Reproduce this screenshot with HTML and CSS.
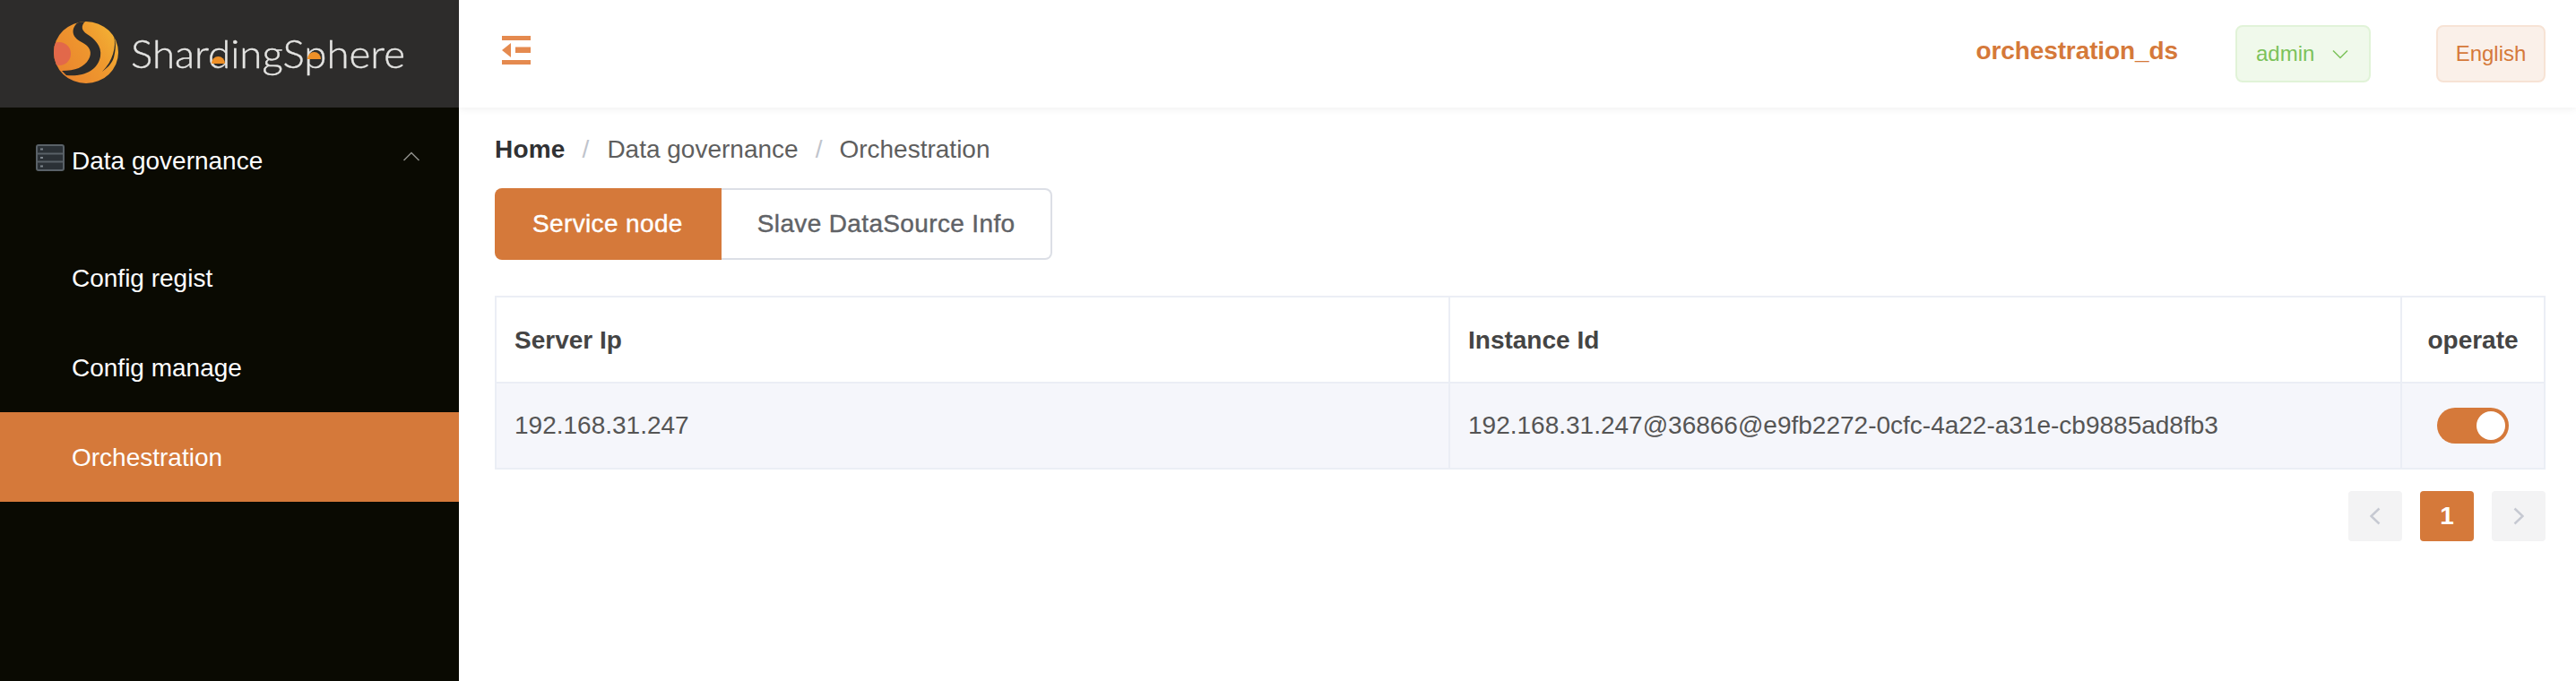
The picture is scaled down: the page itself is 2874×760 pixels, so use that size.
FILE: index.html
```html
<!DOCTYPE html>
<html lang="en">
<head>
<meta charset="utf-8">
<title>ShardingSphere</title>
<link rel="stylesheet" href="styles.css">
</head>
<body>
<div class="app">
  <aside class="sidebar">
    <div class="brand">
      <svg class="logo" width="512" height="120" viewBox="0 0 512 120">
        <defs>
          <linearGradient id="fire" x1="0" y1="0.7" x2="1" y2="0.1">
            <stop offset="0" stop-color="#ea842e"/>
            <stop offset="0.6" stop-color="#ef9a2e"/>
            <stop offset="1" stop-color="#f3b636"/>
          </linearGradient>
          <clipPath id="ball"><ellipse cx="96" cy="58.500" rx="36" ry="34.500"/></clipPath>
        </defs>
        <g clip-path="url(#ball)">
          <rect x="60" y="24" width="72" height="70" fill="url(#fire)"/>
          <circle cx="66" cy="60" r="13" fill="#e2684a"/>
          <path d="M88 24C79 31 79 41 91 47C101 52 103 59 99 66C94 75 84 79 69 79L74 84C93 86 109 79 112 63C114 51 105 43 97 38C91 34 90 29 95 24Z" fill="#2d2c2b"/>
          <path d="M127 40C130 52 126 68 114 80C122 74 125 70 127 64C129 56 130 48 127 40Z" fill="#2d2c2b"/>
          <path d="M118 28H134V44C130 38 124 33 118 28Z" fill="#2d2c2b"/>
        </g>
        <text class="logo-text" x="146" y="76" textLength="306" lengthAdjust="spacingAndGlyphs">ShardingSphere</text>
        <path d="M236 71A7.500 8 0 0 1 251 71Z" fill="#ee9028"/>
        <path d="M343 66A7.500 8 0 0 1 358 66Z" fill="#ee9028"/>
      </svg>
    </div>
    <nav class="menu">
      <div class="menu-title">
        <svg class="menu-icon" width="32" height="30" viewBox="0 0 32 30">
          <rect x="1" y="1" width="30" height="28" rx="2" fill="#2b3136" stroke="#596167" stroke-width="2"/>
          <path d="M1 10.500H31M1 19.500H31" stroke="#596167" stroke-width="2"/>
          <path d="M5 5.500H8M5 15H8M5 24.500H8" stroke="#7d858c" stroke-width="2"/>
        </svg>
        <span class="menu-label">Data governance</span>
        <svg class="chev" width="20" height="11" viewBox="0 0 20 11"><path d="M1.500 10L10 1.500L18.500 10" fill="none" stroke="#8f8f8a" stroke-width="1.500"/></svg>
      </div>
      <a class="menu-item">Config regist</a>
      <a class="menu-item">Config manage</a>
      <a class="menu-item active">Orchestration</a>
    </nav>
  </aside>
  <div class="main">
    <header class="topbar">
      <svg class="collapse" width="32" height="32" viewBox="0 0 32 32">
        <path d="M0 0H32V5H0ZM0 27H32V32H0ZM15 12.500H32V19H15ZM10 8V24L0 16Z" fill="#e58a4f"/>
      </svg>
      <div class="top-right">
        <span class="ds">orchestration_ds</span>
        <button class="pill admin">admin
          <svg width="18" height="11" viewBox="0 0 18 11"><path d="M1 1.500L9 9.500L17 1.500" fill="none" stroke="#7cc25a" stroke-width="1.500"/></svg>
        </button>
        <button class="pill lang">English</button>
      </div>
    </header>
    <section class="content">
      <div class="crumbs">
        <strong>Home</strong><i>/</i><span>Data governance</span><i>/</i><span>Orchestration</span>
      </div>
      <div class="tabs">
        <button class="tab on">Service node</button><button class="tab">Slave DataSource Info</button>
      </div>
      <table class="grid">
        <colgroup><col class="c1"><col class="c2"><col class="c3"></colgroup>
        <thead>
          <tr><th>Server Ip</th><th>Instance Id</th><th class="mid">operate</th></tr>
        </thead>
        <tbody>
          <tr>
            <td>192.168.31.247</td>
            <td>192.168.31.247@36866@e9fb2272-0cfc-4a22-a31e-cb9885ad8fb3</td>
            <td class="mid"><span class="switch"><span class="knob"></span></span></td>
          </tr>
        </tbody>
      </table>
      <div class="pager">
        <button class="page"><svg width="12" height="20" viewBox="0 0 12 20"><path d="M10.500 1.500L1.500 10L10.500 18.500" fill="none" stroke="#c6c9d2" stroke-width="2.500"/></svg></button>
        <button class="page cur">1</button>
        <button class="page"><svg width="12" height="20" viewBox="0 0 12 20"><path d="M1.500 1.500L10.500 10L1.500 18.500" fill="none" stroke="#c6c9d2" stroke-width="2.500"/></svg></button>
      </div>
    </section>
  </div>
</div>
</body>
</html>
```
FILE: styles.css
```css
* { box-sizing: border-box; }
html, body { margin: 0; height: 100%; }
body { font-family: "Liberation Sans", Arial, sans-serif; font-size: 28px; color: #555; background: #fff; overflow: hidden; }
button { font: inherit; cursor: pointer; }

.app { display: flex; height: 760px; }
.sidebar { flex: 0 0 512px; background: #0a0a02; }
.brand { height: 120px; background: #2d2c2b; }
.logo { display: block; filter: blur(0.5px); }
.logo-text { font-family: "Lato", sans-serif; font-weight: 300; font-size: 44px; fill: #e4e4e2; stroke: #e4e4e2; stroke-width: .4px; }
.menu { color: #fff; }
.menu-title { display: flex; align-items: center; height: 112px; padding: 8px 43px 0 40px; }
.menu-icon { flex: none; margin-right: 8px; margin-top: -8px; }
.menu-label { flex: 1; }
.chev { margin-top: -12px; }
.menu-item { display: flex; align-items: center; height: 100px; padding: 2px 0 0 80px; }
.menu-title + .menu-item { margin-top: 28px; }
.menu-item.active { background: #d5793a; }

.main { flex: 1; min-width: 0; }
.topbar { display: flex; align-items: flex-start; justify-content: space-between; height: 120px; padding: 40px 34px 0 48px; background: #fff; box-shadow: 0 2px 8px rgba(0,0,0,.06); }
.top-right { display: flex; align-items: flex-start; margin-top: -12px; }
.ds { margin-right: 64px; margin-top: 13px; font-weight: 700; color: #d5793a; letter-spacing: -.1px; }
.pill { height: 64px; border-radius: 8px; font-size: 24px; }
.admin { display: flex; align-items: center; gap: 20px; width: 151px; padding: 0 0 0 21px; margin-right: 73px; background: #f0f9eb; border: 2px solid #e1f3d8; color: #7cc25a; }
.lang { width: 122px; padding: 0; background: #faf0e9; border: 2px solid #f7e3d5; color: #d5793a; }

.content { padding: 0 34px 0 40px; }
.crumbs { display: flex; align-items: center; height: 90px; padding-top: 3px; color: #5e5e5e; }
.crumbs strong { color: #303133; letter-spacing: .2px; }
.crumbs i { margin: 0 19px; font-style: normal; color: #c0c4cc; }
.crumbs strong + i { margin-right: 20px; }
.tabs { display: flex; height: 80px; }
.tab { height: 80px; padding: 0 39px 0 40px; background: #fff; border: 2px solid #dcdfe6; border-left: 0; border-radius: 0 8px 8px 0; color: #606266; font-weight: 400; letter-spacing: .36px; -webkit-text-stroke: 0.4px #606266; }
.tab.on { padding: 0 43px 0 42px; background: #d5793a; border: 0; border-radius: 8px 0 0 8px; color: #fff; -webkit-text-stroke: 0.4px #fff; }

.grid { width: 100%; margin-top: 40px; border-collapse: collapse; table-layout: fixed; }
.c1 { width: 1064px; }
.c3 { width: 160px; }
.grid th, .grid td { height: 96px; padding: 0 20px; border: 2px solid #ebeef5; text-align: left; }
.grid th { padding-top: 2px; color: #444; font-weight: 700; }
.grid td { background: #f5f6fb; }
.grid .mid { padding: 0; text-align: center; }
.grid th.mid { padding-top: 2px; }
.switch { display: inline-flex; justify-content: flex-end; align-items: center; width: 80px; height: 40px; padding: 4px; border-radius: 20px; background: #d5793a; vertical-align: middle; }
.knob { width: 32px; height: 32px; border-radius: 50%; background: #fff; }

.pager { display: flex; justify-content: flex-end; gap: 20px; margin-top: 24px; }
.page { display: flex; align-items: center; justify-content: center; width: 60px; height: 56px; padding: 0; border: 0; border-radius: 4px; background: #f3f3f4; }
.page.cur { background: #d5793a; color: #fff; font-weight: 700; }
```
